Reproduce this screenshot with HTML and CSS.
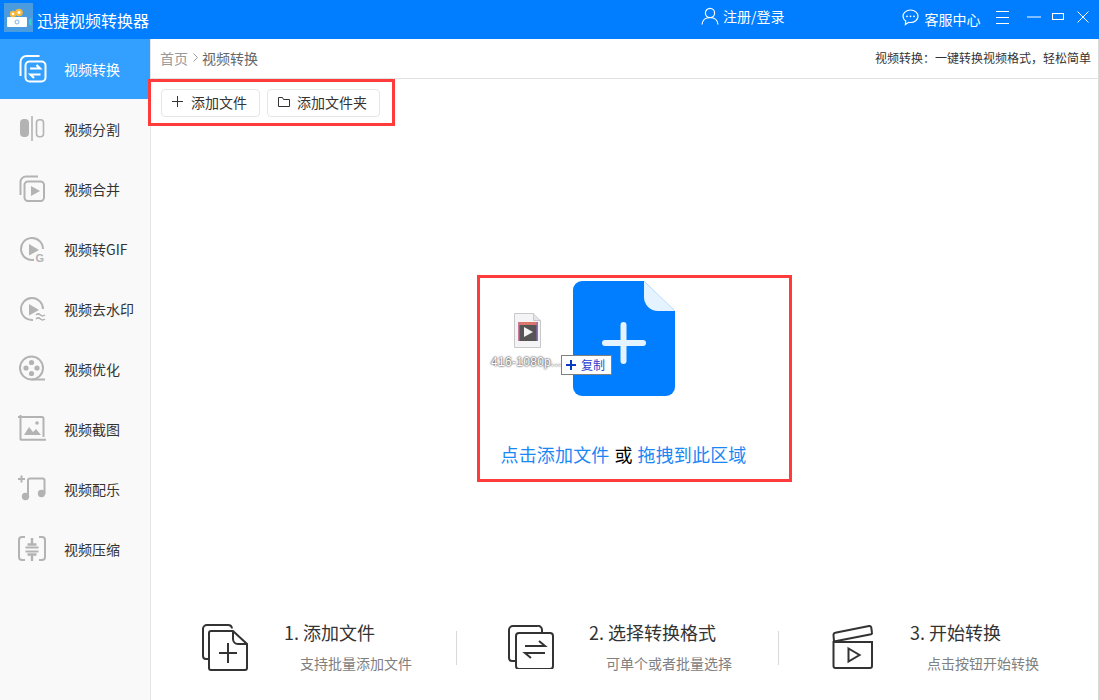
FILE: index.html
```html
<!DOCTYPE html>
<html lang="zh-CN">
<head>
<meta charset="utf-8">
<title>迅捷视频转换器</title>
<link rel="stylesheet" href="styles.css">
</head>
<body>
<div class="app">
  <header class="topbar">
    <svg class="logo" viewBox="0 0 29 29" width="29" height="29">
      <rect width="29" height="29" fill="#4b9bdf"/>
      <rect x="3" y="14" width="20" height="10" rx="1" fill="#fff"/>
      <circle cx="9" cy="11" r="3.200" fill="#f6b93b"/>
      <circle cx="9" cy="11" r="1.300" fill="#fff"/>
      <circle cx="15" cy="9.500" r="3.800" fill="#f6b93b"/>
      <circle cx="15" cy="9.500" r="1.500" fill="#fff"/>
      <path d="M25 16.500l2.500-1.500v8l-2.500-1.500z" fill="#35d0d0"/>
      <circle cx="13" cy="19" r="2" fill="none" stroke="#7fb4e6"/>
    </svg>
    <div class="app-name">迅捷视频转换器</div>
    <div class="top-user">
      <svg viewBox="0 0 18 18" width="18" height="18" fill="none" stroke="#fff" stroke-width="1.200"><circle cx="9" cy="6" r="4.600"/><path d="M1 17.500c.5-4.600 3.600-7 8-7s7.500 2.400 8 7"/></svg>
      <span>注册/登录</span>
    </div>
    <div class="top-service">
      <svg viewBox="0 0 17 17" width="17" height="17" fill="none" stroke="#fff" stroke-width="1.200"><path d="M8.500 1C4.300 1 1 3.800 1 7.300c0 2 1 3.700 2.700 4.800l-.3 3.400 3.300-2.200c.6.100 1.200.2 1.800.2 4.200 0 7.500-2.800 7.500-6.200S12.700 1 8.500 1z"/><circle cx="5" cy="7.300" r=".9" fill="#fff" stroke="none"/><circle cx="8.500" cy="7.300" r=".9" fill="#fff" stroke="none"/><circle cx="12" cy="7.300" r=".9" fill="#fff" stroke="none"/></svg>
      <span>客服中心</span>
    </div>
    <svg class="win-menu" viewBox="0 0 13 13" width="13" height="13" stroke="#fff" fill="none"><path d="M0 .5h13M0 6.500h13M0 12.500h13"/></svg>
    <svg class="win-min" viewBox="0 0 14 2" width="14" height="2" stroke="#fff"><path d="M0 1h14"/></svg>
    <svg class="win-max" viewBox="0 0 12 7" width="12" height="7" stroke="#fff" fill="none" stroke-width="1.100"><rect x=".5" y=".5" width="11" height="6"/></svg>
    <svg class="win-close" viewBox="0 0 12 12" width="12" height="12" stroke="#fff" fill="none"><path d="M.5.500l11 11M11.500.500l-11 11"/></svg>
  </header>

  <div class="body">
    <nav class="sidebar">
      <div class="nav-item active">
        <svg class="nav-icon" viewBox="0 0 28 28" fill="none" stroke="#fff" stroke-width="2"><path d="M2.500 21V7a6 6 0 0 1 6-6h13"/><rect x="7.500" y="6.500" width="20" height="20" rx="4"/><path d="M12 13.500h10l-3.500-3.500M22.500 19.500h-10l3.500 3.500" stroke-width="2.200"/></svg>
        <span>视频转换</span>
      </div>
      <div class="nav-item">
        <svg class="nav-icon" viewBox="0 0 28 28"><rect x="2" y="4" width="9" height="18" rx="4" fill="#b3b3b3"/><path d="M14 1v25" stroke="#b3b3b3" stroke-width="1.600"/><rect x="18.500" y="4.700" width="7" height="17" rx="3" fill="none" stroke="#b3b3b3" stroke-width="1.600"/></svg>
        <span>视频分割</span>
      </div>
      <div class="nav-item">
        <svg class="nav-icon" viewBox="0 0 28 28" fill="none" stroke="#b3b3b3" stroke-width="2"><path d="M2.500 20V7a5.500 5.500 0 0 1 5.500-5.500h12"/><rect x="6.500" y="6.500" width="19.500" height="19.500" rx="3.500"/><path d="M13 11l9 5-9 5z" fill="#b3b3b3" stroke="none"/></svg>
        <span>视频合并</span>
      </div>
      <div class="nav-item">
        <svg class="nav-icon" viewBox="0 0 28 28" fill="none" stroke="#b3b3b3" stroke-width="2"><path d="M16 24.800A11 11 0 1 1 25 14"/><path d="M11 9l10 6-10 5.500z" fill="#b3b3b3" stroke="none"/><text class="gif-g" x="17.500" y="26.500">G</text></svg>
        <span>视频转GIF</span>
      </div>
      <div class="nav-item">
        <svg class="nav-icon" viewBox="0 0 28 28" fill="none" stroke="#b3b3b3" stroke-width="2"><path d="M15 25A11 11 0 1 1 25 14"/><path d="M11 9l10 6-10 5.500z" fill="#b3b3b3" stroke="none"/><path d="M18 20c1.500-1.500 3-1.500 4.500 0s3 1 4.500 0M18 24c1.500-1.500 3-1.500 4.500 0s3 1 4.500 0" stroke-width="1.500"/></svg>
        <span>视频去水印</span>
      </div>
      <div class="nav-item">
        <svg class="nav-icon" viewBox="0 0 28 28" fill="none" stroke="#b3b3b3" stroke-width="2"><circle cx="13.500" cy="13" r="11.500"/><path d="M13.500 24.500H27"/><g fill="#b3b3b3" stroke="none"><circle cx="13.500" cy="7.500" r="2.600"/><circle cx="13.500" cy="18.500" r="2.600"/><circle cx="8" cy="13" r="2.600"/><circle cx="19" cy="13" r="2.600"/></g></svg>
        <span>视频优化</span>
      </div>
      <div class="nav-item">
        <svg class="nav-icon" viewBox="0 0 28 28" fill="none" stroke="#b3b3b3" stroke-width="2"><path d="M0 2h24a1.500 1.500 0 0 1 1.500 1.500V22M2.500 0v24a.8.8 0 0 0 .8.800H28"/><path d="M6 20l5-8 4 5 3-3 5 6z" fill="#b3b3b3" stroke="none"/><circle cx="19" cy="8" r="1.800" fill="#b3b3b3" stroke="none"/></svg>
        <span>视频截图</span>
      </div>
      <div class="nav-item">
        <svg class="nav-icon" viewBox="0 0 28 28" fill="none" stroke="#b3b3b3" stroke-width="2"><path d="M0 4h7M3.500 .5v7"/><path d="M10 21V5.500a2 2 0 0 1 2-2h13a1.500 1.500 0 0 1 1.500 1.500v14"/><circle cx="7.500" cy="21.500" r="3.700" fill="#b3b3b3" stroke="none"/><circle cx="23.500" cy="18.500" r="3.700" fill="#b3b3b3" stroke="none"/></svg>
        <span>视频配乐</span>
      </div>
      <div class="nav-item">
        <svg class="nav-icon" viewBox="0 0 28 28" fill="none" stroke="#b3b3b3" stroke-width="2"><path d="M7 2H4a3 3 0 0 0-3 3v17a3 3 0 0 0 3 3h3M21 2h3a3 3 0 0 1 3 3v17a3 3 0 0 1-3 3h-3"/><path d="M7.500 12.500h13M7.500 16.500h13"/><path d="M14 3v6M14 20v6" stroke-width="2.400"/><path d="M9.500 9.500h9M9.500 19.500h9" stroke-width="2.600"/></svg>
        <span>视频压缩</span>
      </div>
    </nav>

    <main class="main">
      <div class="crumbs">
        <span class="crumb-home">首页</span>
        <svg class="crumb-sep" viewBox="0 0 5 9" width="5" height="9" fill="none" stroke="#999"><path d="M.5.500l4 4-4 4"/></svg>
        <span class="crumb-here">视频转换</span>
        <span class="crumb-tip">视频转换：一键转换视频格式，轻松简单</span>
      </div>
      <div class="toolbar">
        <button class="tool-btn tool-file">
          <svg viewBox="0 0 11 11" width="11" height="11" stroke="#333" fill="none"><path d="M5.500 0v11M0 5.500h11"/></svg>
          添加文件
        </button>
        <button class="tool-btn tool-folder">
          <svg viewBox="0 0 12 10" width="12" height="10" stroke="#333" fill="none"><path d="M.5 9.500V.5h4l1 2h6v7z"/></svg>
          添加文件夹
        </button>
      </div>
      <section class="drop">
        <svg class="drop-file" viewBox="0 0 102 115" width="102" height="115">
          <path d="M9 0h62l31 30v76a9 9 0 0 1-9 9H9a9 9 0 0 1-9-9V9a9 9 0 0 1 9-9z" fill="#007eff"/>
          <path d="M71 0l31 30H85a14 14 0 0 1-14-14z" fill="#e5f2ff"/>
          <path d="M50.500 44v36M32 62h38" stroke="#e5f2ff" stroke-width="6" stroke-linecap="round"/>
        </svg>
        <p class="drop-text"><span class="drop-link">点击添加文件</span> 或 <span class="drop-link">拖拽到此区域</span></p>
      </section>
      <section class="steps">
        <div class="step step-one">
          <svg class="step-icon" viewBox="0 0 46 47" width="46" height="47" fill="none" stroke="#333" stroke-width="2"><path d="M6 35H4a3 3 0 0 1-3-3V5a4 4 0 0 1 4-4h21a4 4 0 0 1 4 3.500"/><path d="M9 7h22l14 13v24a2 2 0 0 1-2 2H9a2 2 0 0 1-2-2V9a2 2 0 0 1 2-2z" fill="#fff"/><path d="M31 7v8a5 5 0 0 0 5 5h9"/><path d="M26 19v20M17 29h18"/></svg>
          <div class="step-copy">
            <div class="step-title">1. 添加文件</div>
            <div class="step-sub">支持批量添加文件</div>
          </div>
        </div>
        <div class="step step-two">
          <svg class="step-icon" viewBox="0 0 46 44" width="46" height="44" fill="none" stroke="#333" stroke-width="2"><path d="M7 36H4a3 3 0 0 1-3-3V5a4 4 0 0 1 4-4h24a4 4 0 0 1 5 4v3"/><rect x="8" y="8" width="37" height="36" rx="3" fill="#fff"/><path d="M17 21h20l-6-5M37 28H17l6 5"/></svg>
          <div class="step-copy">
            <div class="step-title">2. 选择转换格式</div>
            <div class="step-sub">可单个或者批量选择</div>
          </div>
        </div>
        <div class="step step-three">
          <svg class="step-icon" viewBox="0 0 42 44" width="42" height="44" fill="none" stroke="#333" stroke-width="2"><path d="M2 16.500L1.500 10a2 2 0 0 1 1.800-2.200L37 1a2 2 0 0 1 2.300 1.700l.7 5.300a1 1 0 0 1-.8 1.200z"/><path d="M1.500 17H40v24a2 2 0 0 1-2 2H3.500a2 2 0 0 1-2-2z"/><path d="M16.500 23.500l11 6.500-11 6.500z"/></svg>
          <div class="step-copy">
            <div class="step-title">3. 开始转换</div>
            <div class="step-sub">点击按钮开始转换</div>
          </div>
        </div>
      </section>
    </main>
  </div>

  <div class="mark mark-tools"></div>
  <div class="mark mark-drop"></div>
  <div class="ghost">
    <svg class="ghost-icon" viewBox="0 0 27 35" width="27" height="35">
      <path d="M.5.500h19l7 7v27H.5z" fill="#f4f4f7" stroke="#c8c8c8"/>
      <path d="M19.500.500v7h7" fill="#e4e4e8" stroke="#c8c8c8"/>
      <rect x="4" y="9" width="20" height="19" fill="#555"/>
      <rect x="4" y="9" width="20" height="3" fill="#d9776b"/>
      <rect x="4" y="9" width="1.500" height="19" fill="#c77a9a"/>
      <rect x="22.500" y="9" width="1.500" height="19" fill="#9a6ac7"/>
      <path d="M10 14l9 5-9 5z" fill="#f4f4f4"/>
    </svg>
    <span class="ghost-name">416-1080p...</span>
    <div class="ghost-tag">
      <svg viewBox="0 0 10 10" width="10" height="10" stroke="#0a3ac0" stroke-width="2"><path d="M5 0v10M0 5h10"/></svg>
      <span>复制</span>
    </div>
  </div>
</div>
</body>
</html>
```

FILE: styles.css
```css
* { box-sizing: border-box; }
html, body { margin: 0; padding: 0; }
body {
  width: 1099px;
  height: 700px;
  overflow: hidden;
  background: #fff;
  font-family: "Noto Sans CJK SC", "Liberation Sans", sans-serif;
  color: #333;
}
.app { position: relative; display: flex; flex-direction: column; width: 1099px; height: 700px; }

/* title bar */
.topbar {
  flex: 0 0 39px;
  display: flex;
  align-items: center;
  padding-left: 4px;
  background: #007eff;
  color: #fff;
  font-size: 14px;
  line-height: 20px;
}
.logo { margin-top: -4px; flex: none; }
.app-name { margin-left: 4px; font-size: 16px; line-height: 22px; width: 112px; }
.top-user { display: flex; align-items: center; gap: 4px; margin-left: 552px; margin-top: -8px; }
.top-service { display: flex; align-items: center; gap: 6px; margin-left: 117px; margin-top: -4px; }
.top-service span { margin-top: 3px; }
.win-menu { margin-left: 15px; margin-top: -4px; flex: none; }
.win-min { margin-left: 18px; margin-top: -5px; flex: none; }
.win-max { margin-left: 11px; margin-top: -6px; flex: none; }
.win-close { margin-left: 13px; margin-top: -6px; flex: none; }

.body { flex: 1; display: flex; min-height: 0; }

/* sidebar */
.sidebar {
  flex: 0 0 151px;
  background: #f9f9f9;
  border-right: 1px solid #e6e6e6;
}
.nav-item {
  display: flex;
  align-items: center;
  gap: 18px;
  height: 60px;
  padding-left: 18px;
  font-size: 14px;
  line-height: 20px;
  color: #333;
}
.nav-item.active { background: #33a0ff; color: #fff; }
.nav-icon { flex: none; width: 28px; height: 28px; overflow: visible; }
.gif-g { font: 700 11px "Liberation Sans", sans-serif; fill: #b3b3b3; stroke: none; }

/* main */
.main {
  flex: 1;
  min-width: 0;
  display: flex;
  flex-direction: column;
  border-right: 1px solid #dcdcdc;
}
.crumbs {
  flex: 0 0 40px;
  display: flex;
  align-items: center;
  padding: 0 7px 2px 9px;
  border-bottom: 1px solid #e2e2e2;
  font-size: 14px;
  line-height: 20px;
}
.crumb-home { color: #999; }
.crumb-sep { margin: -1px 4px 0 5px; }
.crumb-here { color: #666; }
.crumb-tip { margin-left: auto; font-size: 12px; color: #333; }

.toolbar { flex: 0 0 47px; display: flex; align-items: flex-start; gap: 7px; padding: 10px 0 0 10px; }
.tool-btn {
  display: flex;
  align-items: center;
  height: 28px;
  padding: 0 0 2px;
  background: #fff;
  border: 1px solid #e6e6e6;
  border-radius: 4px;
  font: 14px/20px "Noto Sans CJK SC", sans-serif;
  color: #333;
}
.tool-file { width: 99px; gap: 8px; padding-left: 10px; }
.tool-folder { width: 113px; gap: 7px; padding-left: 10px; }
.tool-btn svg { margin-top: -1px; flex: none; }

/* drop */
.drop { flex: 1; display: flex; flex-direction: column; align-items: center; padding-top: 155px; }
.drop-file { flex: none; margin-left: -2px; }
.drop-text { margin: 45px 0 0 -2px; font-size: 18px; line-height: 26px; color: #000; white-space: pre; word-spacing: 1px; }
.drop-link { color: #1a87f5; letter-spacing: .15px; }

/* steps */
.steps { flex: 0 0 100px; display: grid; grid-template-columns: 305px 322px 320px; align-items: start; padding-top: 24px; }
.step { display: flex; align-items: flex-start; }
.step-one { padding-left: 51px; }
.step-two { padding-left: 51px; }
.step-three { padding-left: 53px; }
.step + .step { border-left: 1px solid #d9d9d9; height: 34px; margin-top: 7px; }
.step + .step .step-icon { margin-top: -6px; }
.step + .step .step-copy { margin-top: -11px; }
.step-copy { margin-left: 36px; margin-top: -4px; }
.step-two .step-copy { margin-left: 35px; }
.step-three .step-copy { margin-left: 36px; }
.step-title { font-size: 18px; line-height: 24px; color: #333; white-space: nowrap; }
.step-sub { margin-top: 9px; margin-left: 16px; font-size: 14px; line-height: 20px; color: #808080; white-space: nowrap; }
.step + .step .step-sub { margin-left: 17px; }

/* annotations */
.mark { position: absolute; border: 3px solid #ff3b3b; pointer-events: none; }
.mark-tools { left: 148px; top: 79px; width: 247px; height: 47px; }
.mark-drop { left: 477px; top: 275px; width: 315px; height: 207px; }

/* drag ghost */
.ghost { position: absolute; left: 491px; top: 313px; width: 121px; height: 62px; }
.ghost-icon { position: absolute; left: 23px; top: 0; }
.ghost-name {
  position: absolute;
  left: 0;
  top: 41px;
  font: 12px/16px "Liberation Sans", sans-serif;
  letter-spacing: .3px;
  color: #fff;
  text-shadow: 0 0 2px #444, 0 0 2px #444;
  white-space: nowrap;
}
.ghost-tag {
  position: absolute;
  left: 70px;
  top: 42px;
  width: 51px;
  height: 20px;
  display: flex;
  align-items: center;
  gap: 5px;
  padding-left: 4px;
  background: #fff;
  border: 1px solid #808080;
  font-size: 12px;
  line-height: 16px;
  color: #2a3fd0;
}
```
